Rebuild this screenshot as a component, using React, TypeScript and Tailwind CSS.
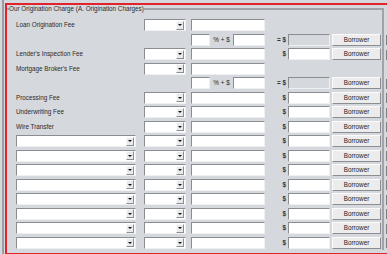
import React from 'react';

type Row = {
  label?: string;
  wide?: boolean;
  drop?: boolean;
  mid: 'text' | 'split';
  tail: 'none' | 'plain' | 'calc';
};

const rows: Row[] = [
  { label: 'Loan Origination Fee', drop: true, mid: 'text', tail: 'none' },
  { mid: 'split', tail: 'calc' },
  { label: "Lender's Inspection Fee", drop: true, mid: 'text', tail: 'plain' },
  { label: "Mortgage Broker's Fee", drop: true, mid: 'text', tail: 'none' },
  { mid: 'split', tail: 'calc' },
  { label: 'Processing Fee', drop: true, mid: 'text', tail: 'plain' },
  { label: 'Underwriting Fee', drop: true, mid: 'text', tail: 'plain' },
  { label: 'Wire Transfer', drop: true, mid: 'text', tail: 'plain' },
  ...Array.from({ length: 8 }, () => ({ wide: true, drop: true, mid: 'text' as const, tail: 'plain' as const })),
];

const sunken = 'h-[12px] border border-t-[#8a8d91] border-l-[#8a8d91] border-b-[#eef0f2] border-r-[#eef0f2]';

const Arrow = () => (
  <div className="w-[8px] h-[9px] mr-[1px] bg-[#e9eaec] border border-t-[#fafafa] border-l-[#fafafa] border-b-[#8a8d91] border-r-[#8a8d91] flex items-center justify-center">
    <svg width="4" height="2" viewBox="0 0 4 2">
      <path d="M0 0H4L2 2Z" fill="#111" />
    </svg>
  </div>
);

const Combo = ({ width }: { width: string }) => (
  <div className={`${width} ${sunken} bg-white flex items-center justify-end`}>
    <Arrow />
  </div>
);

const Button = () => (
  <div className="w-[49px] h-[12px] bg-[#ececec] border border-t-[#fbfbfb] border-l-[#fbfbfb] border-b-[#8a8d91] border-r-[#8a8d91] flex items-center justify-center text-[#222]">
    Borrower
  </div>
);

export default function App() {
  return (
    <div
      className="w-[387px] h-[254px] overflow-hidden bg-[#d5d8dc] text-[6.3px] leading-[8px] text-[#2a2a2a]"
      style={{ fontFamily: '"Liberation Sans", Arial, sans-serif' }}
    >
      <div className="h-full flex">
        <div className="w-[2px] ml-[2px] h-full shrink-0 bg-[#9a9da1]" />
        <div className="w-[400px] shrink-0 h-[252px] ml-[1px] mt-[3px] border-l-2 border-t-2 border-b-2 border-[#e3232b] flex">
          <fieldset className="w-[377px] shrink-0 h-[245px] border-t-2 border-r-2 border-[#a0a3a7] pt-[5px]">
            <legend className="ml-[2px] px-0 leading-[8px]">Our Origination Charge (A. Origination Charges)</legend>
            {rows.map((r, i) => (
              <div key={i} className="h-[14.5px] flex items-center pl-[9px]">
                <div className="w-[120px] flex items-center">
                  {r.wide ? <Combo width="w-[120px]" /> : <span className="whitespace-nowrap">{r.label}</span>}
                </div>
                <div className="w-[42px] ml-[8px]">{r.drop && <Combo width="w-[42px]" />}</div>
                <div className="w-[74px] ml-[5px] flex items-center">
                  {r.mid === 'text' ? (
                    <div className={`w-[74px] ${sunken} bg-white`} />
                  ) : (
                    <>
                      <div className={`w-[19px] ${sunken} bg-white`} />
                      <span className="w-[23px] text-center whitespace-nowrap">% + $</span>
                      <div className={`w-[32px] ${sunken} bg-white`} />
                    </>
                  )}
                </div>
                {r.tail !== 'none' && (
                  <>
                    <span className="w-[23px] text-right pr-[2px] whitespace-nowrap font-bold text-[#333]">
                      {r.tail === 'calc' ? '= $' : '$'}
                    </span>
                    <div className={`w-[42px] ${sunken} ${r.tail === 'calc' ? 'bg-[#d5d8dc]' : 'bg-white'}`} />
                    <div className="ml-[2px]">
                      <Button />
                    </div>
                  </>
                )}
              </div>
            ))}
          </fieldset>
          {/* edge of the next column, cut off by the window */}
          <div className="ml-[2px] pt-[13.25px] flex flex-col">
            {rows.map((r, i) => (
              <div key={i} className="h-[14.5px] flex items-center">
                {r.tail !== 'none' && <div className="w-px h-[10px] bg-[#7c7f83]" />}
              </div>
            ))}
          </div>
        </div>
      </div>
    </div>
  );
}
